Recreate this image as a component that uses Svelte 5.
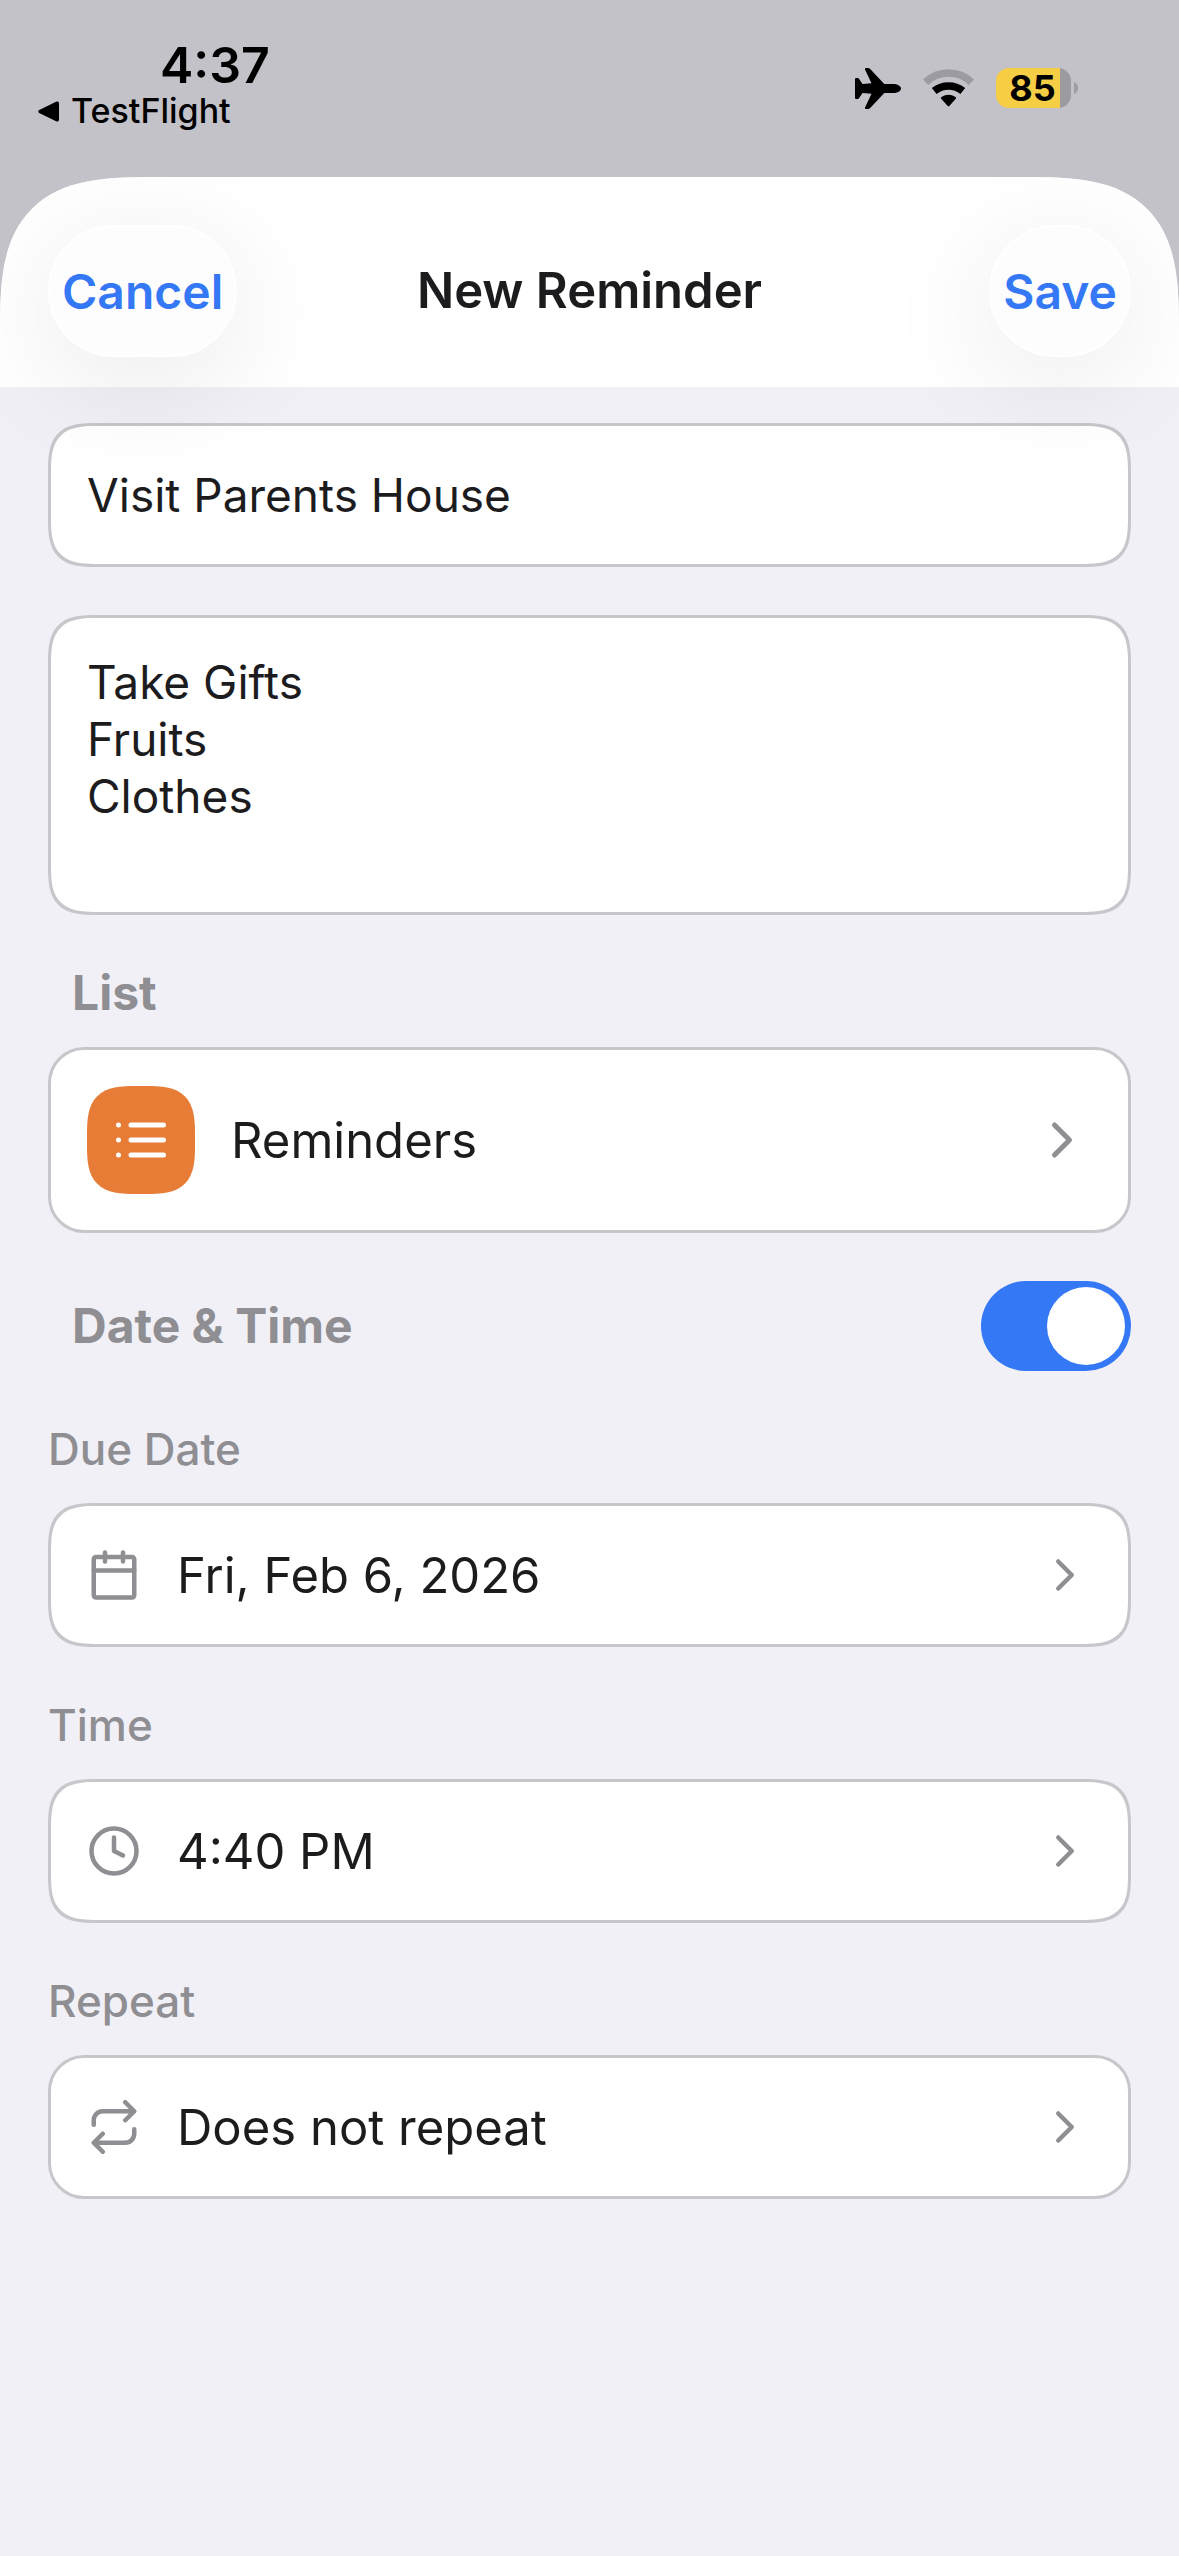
<script>
  let title = $state('Visit Parents House');
  let notes = $state('Take Gifts\nFruits\nClothes');
  let scheduled = $state(true);

  const rows = [
    { id: 'due', label: 'Due Date', value: 'Fri, Feb 6, 2026', icon: 'calendar' },
    { id: 'time', label: 'Time', value: '4:40 PM', icon: 'clock' },
    { id: 'repeat', label: 'Repeat', value: 'Does not repeat', icon: 'repeat' }
  ];
</script>

<div class="screen">
  <div class="status">
    <div class="status-left">
      <span class="clock">4:37</span>
      <a class="back" href="#testflight">
        <svg class="back-arrow" viewBox="0 0 21 21" aria-hidden="true">
          <path d="M1.2 9 18.6.6Q21 0 21 2.4V18.6Q21 21 18.6 20.4L1.2 12Q-.8 10.5 1.2 9Z" />
        </svg>
        TestFlight
      </a>
    </div>
    <div class="status-right">
      <svg class="plane" viewBox="0 0 46 41" aria-hidden="true">
        <path d="M0 11Q0 10 1 10H2.5Q3.500 10 4 10.8L7.500 16 16.500 15.300 10 1.500Q9.500 0 11 0H13Q14.300 0 15.200 1L29.300 16H40Q46 17.500 46 20.500 46 23.500 40 25H29.300L15.200 40Q14.300 41 13 41H11Q9.500 41 10 39.500L16.500 25.700 7.500 25 4 30.200Q3.500 31 2.500 31H1Q0 31 0 30Z" />
      </svg>
      <svg class="wifi" viewBox="0 0 51 38" aria-hidden="true">
        <path class="faint" d="M2.600 13.300A33 33 0 0 1 48.400 13.300" />
        <path class="arc" d="M11.200 22A22.600 22.600 0 0 1 39.800 22" />
        <path d="M18.200 29.800Q17.300 28.700 18.500 28 25.500 23.500 32.500 28 33.700 28.700 32.800 29.800L26.300 37Q25.500 37.800 24.700 37Z" />
      </svg>
      <div class="battery">
        <span class="cell">85</span>
        <svg class="nub" viewBox="0 0 4 12" aria-hidden="true"><path d="M0 0Q4 2 4 6T0 12Z" /></svg>
      </div>
    </div>
  </div>

  <div class="sheet">
    <header>
      <div class="side"><button class="pill" type="button">Cancel</button></div>
      <h1>New Reminder</h1>
      <div class="side end"><button class="pill" type="button">Save</button></div>
    </header>

    <main>
      <input class="box smooth title" type="text" aria-label="Title" bind:value={title} />
      <textarea class="box smooth notes" aria-label="Notes" rows="4" bind:value={notes}></textarea>

      <section class="field">
        <h2 id="list-label">List</h2>
        <button class="box row list" type="button" aria-labelledby="list-label list-value">
          <span class="tile">
            <svg class="stroke large" viewBox="0 0 24 24" aria-hidden="true">
              <path d="M8 6h13M8 12h13M8 18h13M3 6h.01M3 12h.01M3 18h.01" />
            </svg>
          </span>
          <span class="value" id="list-value">Reminders</span>
          <svg class="stroke large" viewBox="0 0 24 24" aria-hidden="true"><path d="m9 18 6-6-6-6" /></svg>
        </button>
      </section>

      <div class="switch-row">
        <label for="scheduled">Date &amp; Time</label>
        <input id="scheduled" class="switch" type="checkbox" role="switch" bind:checked={scheduled} />
      </div>

      {#if scheduled}
        {#each rows as row (row.id)}
          <section class="field">
            <h3 id="{row.id}-label">{row.label}</h3>
            <button
              class="box row"
              class:smooth={row.icon !== 'repeat'}
              type="button"
              aria-labelledby="{row.id}-label {row.id}-value"
            >
              <svg class="stroke" viewBox="0 0 24 24" aria-hidden="true">
                {#if row.icon === 'calendar'}
                  <rect x="3" y="4" width="18" height="18" rx="1" />
                  <path d="M16 2v4M8 2v4M3 10h18" />
                {:else if row.icon === 'clock'}
                  <circle cx="12" cy="12" r="10" />
                  <path d="M12 6v6l4 2" />
                {:else}
                  <path d="m17 1 4 4-4 4M3 11V9a4 4 0 0 1 4-4h14M7 23l-4-4 4-4M21 13v2a4 4 0 0 1-4 4H3" />
                {/if}
              </svg>
              <span class="value" id="{row.id}-value">{row.value}</span>
              <svg class="stroke" viewBox="0 0 24 24" aria-hidden="true"><path d="m9 18 6-6-6-6" /></svg>
            </button>
          </section>
        {/each}
      {/if}
    </main>
  </div>
</div>

<style>
  :global(body) {
    margin: 0;
    background: #c3c2c8;
  }

  .screen {
    --ink: #1c1c1e;
    --grey: #8e8e93;
    --line: #c6c6cb;
    --blue: #3478f6;
    display: flex;
    flex-direction: column;
    min-height: 100vh;
    background: #c3c2c8;
    color: var(--ink);
    font-family: Inter, 'Liberation Sans', sans-serif;
  }

  .screen * {
    box-sizing: border-box;
  }

  svg {
    flex: none;
    display: block;
  }

  button,
  input,
  textarea {
    margin: 0;
    font: inherit;
    color: inherit;
  }

  h1,
  h2,
  h3 {
    margin: 0;
  }

  .status {
    display: flex;
    justify-content: space-between;
    height: 177px;
    padding: 40px 101px 0 38px;
    color: #000;
  }

  .clock {
    display: block;
    padding-left: 122px;
    font-size: 50px;
    font-weight: 600;
    line-height: 50px;
  }

  .back {
    display: flex;
    align-items: center;
    gap: 12px;
    font-size: 34px;
    font-weight: 500;
    line-height: 42px;
    color: inherit;
    text-decoration: none;
  }

  .back-arrow {
    width: 21px;
    height: 21px;
  }

  .status-right {
    display: flex;
    align-items: center;
    gap: 22px;
    height: 96px;
  }

  .plane {
    width: 46px;
    height: 41px;
  }

  .wifi {
    width: 51px;
    height: 38px;
  }

  .wifi .faint,
  .wifi .arc {
    fill: none;
    stroke: #000;
    stroke-width: 7.5;
  }

  .wifi .faint {
    stroke: #9c9ba0;
  }

  .battery {
    display: flex;
    align-items: center;
    gap: 3px;
  }

  .cell {
    width: 75px;
    padding-right: 2px;
    border-radius: 13px;
    background: linear-gradient(90deg, #f5ce46 64px, #9c9ba0 64px);
    font-size: 36px;
    font-weight: 700;
    line-height: 40px;
    text-align: center;
  }

  .nub {
    width: 4px;
    height: 12px;
    fill: #9c9ba0;
  }

  .sheet {
    flex: 1;
    overflow: hidden;
    border-radius: 118px 118px 0 0;
    background: #f1f0f6;
  }

  header {
    position: relative;
    z-index: 1;
    display: flex;
    align-items: center;
    padding: 48px 48px 30px;
    background: #fff;
  }

  .side {
    flex: 1;
    display: flex;
  }

  .end {
    justify-content: flex-end;
  }

  h1 {
    font-size: 49px;
    font-weight: 600;
    line-height: 60px;
  }

  .pill {
    height: 132px;
    padding: 0 12px;
    border: 2px solid #fff;
    border-radius: 66px;
    background: #fdfdfd;
    box-shadow: 0 24px 120px rgb(0 0 0 / 9%);
    font-size: 48px;
    font-weight: 600;
    color: var(--blue);
  }

  main {
    display: flex;
    flex-direction: column;
    gap: 48px;
    padding: 36px 48px;
  }

  .box {
    display: block;
    width: 100%;
    padding: 36px;
    border: 3px solid var(--line);
    border-radius: 36px;
    outline: none;
    background: #fff;
    font-size: 46px;
    line-height: 57px;
  }

  .title {
    height: 144px;
  }

  .notes {
    height: 300px;
    resize: none;
  }

  .field {
    display: flex;
    flex-direction: column;
    gap: 24px;
  }

  h2,
  .switch-row label {
    padding-left: 24px;
    font-size: 48px;
    font-weight: 700;
    line-height: 60px;
    color: var(--grey);
  }

  h3 {
    font-size: 44px;
    font-weight: 500;
    line-height: 60px;
    color: var(--grey);
  }

  .row {
    display: flex;
    align-items: center;
    gap: 36px;
    height: 144px;
    font-size: 49px;
    text-align: left;
  }

  .list {
    height: 186px;
  }

  .value {
    flex: 1;
  }

  .stroke {
    width: 54px;
    height: 54px;
    fill: none;
    stroke: var(--grey);
    stroke-width: 2;
    stroke-linecap: round;
    stroke-linejoin: round;
  }

  .large {
    width: 60px;
    height: 60px;
  }

  .tile {
    display: grid;
    place-items: center;
    width: 108px;
    height: 108px;
    border-radius: 36px;
    background: #e77c37;
  }

  .tile .stroke {
    stroke: #fff;
  }

  .switch-row {
    display: flex;
    align-items: center;
    justify-content: space-between;
  }

  .switch {
    display: flex;
    width: 150px;
    height: 90px;
    padding: 6px;
    border-radius: 45px;
    background: #d5d5da;
    appearance: none;
  }

  .switch::before {
    content: '';
    width: 78px;
    height: 78px;
    border-radius: 50%;
    background: #fff;
  }

  .switch:checked {
    justify-content: flex-end;
    background: var(--blue);
  }

  /* Continuous corners where the browser can draw them */
  @supports (corner-shape: squircle) {
    .sheet {
      border-radius: 156px 156px 0 0;
      corner-shape: superellipse(1.6);
    }

    .smooth,
    .tile {
      border-radius: 50px;
      corner-shape: superellipse(1.6);
    }
  }
</style>
